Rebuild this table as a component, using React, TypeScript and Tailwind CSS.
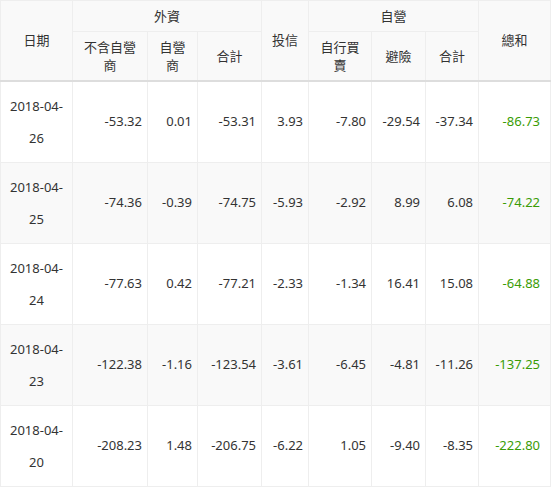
const rows = [
  { date: ['2018-04-', '26'], v: ['-53.32', '0.01', '-53.31', '3.93', '-7.80', '-29.54', '-37.34'], total: '-86.73' },
  { date: ['2018-04-', '25'], v: ['-74.36', '-0.39', '-74.75', '-5.93', '-2.92', '8.99', '6.08'], total: '-74.22' },
  { date: ['2018-04-', '24'], v: ['-77.63', '0.42', '-77.21', '-2.33', '-1.34', '16.41', '15.08'], total: '-64.88' },
  { date: ['2018-04-', '23'], v: ['-122.38', '-1.16', '-123.54', '-3.61', '-6.45', '-4.81', '-11.26'], total: '-137.25' },
  { date: ['2018-04-', '20'], v: ['-208.23', '1.48', '-206.75', '-6.22', '1.05', '-9.40', '-8.35'], total: '-222.80' },
];

const widths = ['w-[72px]', 'w-[75px]', 'w-[50px]', 'w-[64px]', 'w-[47px]', 'w-[63px]', 'w-[54px]', 'w-[53px]', 'w-[72px]'];

export default function App() {
  const th = 'border border-[#eee] bg-[#f9f9f9] font-normal text-center align-middle px-[9px] leading-[18px]';
  return (
    <div className="w-[551px] bg-white text-[13px] text-[#333]" style={{ fontFamily: '"Noto Sans", "Noto Sans CJK TC", sans-serif' }}>
      <table className="table-fixed border-collapse w-[551px]">
        <colgroup>
          {widths.map((w, i) => (
            <col key={i} className={w} />
          ))}
        </colgroup>
        <thead>
          <tr className="h-[31px]">
            <th rowSpan={2} className={`${th} border-b-2 border-b-[#ddd]`}>日期</th>
            <th colSpan={3} className={th}>外資</th>
            <th rowSpan={2} className={`${th} border-b-2 border-b-[#ddd]`}>投信</th>
            <th colSpan={3} className={th}>自營</th>
            <th rowSpan={2} className={`${th} border-b-2 border-b-[#ddd]`}>總和</th>
          </tr>
          <tr className="h-[49px]">
            {['不含自營商', '自營商', '合計'].map((t) => (
              <th key={t} className={`${th} border-b-2 border-b-[#ddd]`}>{t}</th>
            ))}
            {['自行買賣', '避險', '合計'].map((t) => (
              <th key={t + '2'} className={`${th} border-b-2 border-b-[#ddd]`}>{t}</th>
            ))}
          </tr>
        </thead>
        <tbody>
          {rows.map((r, i) => (
            <tr key={i} className={`h-[81px] ${i % 2 === 1 ? 'bg-[#f9f9f9]' : 'bg-white'}`}>
              <td className="border border-[#eee] text-center align-middle px-2 py-2 leading-[32px]">
                {r.date[0]}
                <br />
                {r.date[1]}
              </td>
              {r.v.map((v, j) => (
                <td key={j} className="border border-[#eee] text-right align-middle pr-[5px] pl-1">
                  {v}
                </td>
              ))}
              <td className="border border-[#eee] text-right align-middle pr-[10px] text-[#3a9c05]">{r.total}</td>
            </tr>
          ))}
        </tbody>
      </table>
    </div>
  );
}
